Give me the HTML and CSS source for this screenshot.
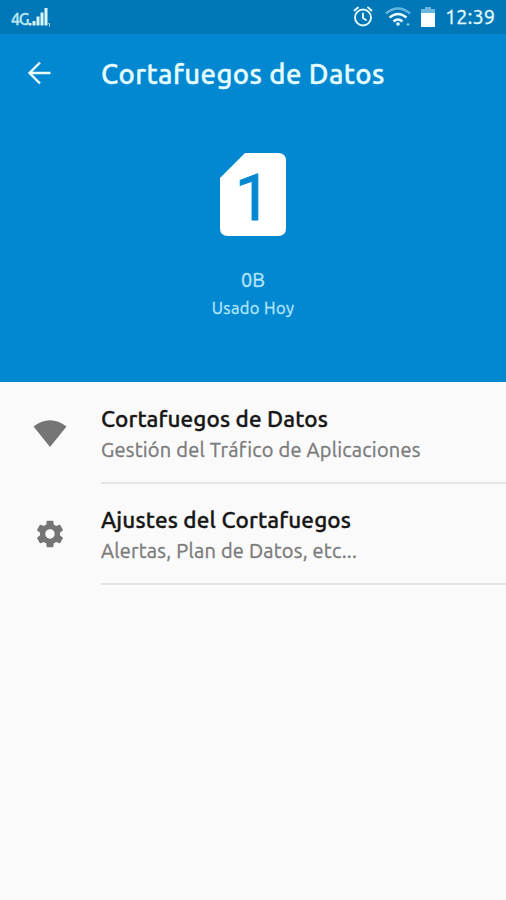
FILE: index.html
```html
<!DOCTYPE html>
<html lang="es">
<head>
<meta charset="utf-8">
<title>Cortafuegos de Datos</title>
<link rel="stylesheet" href="styles.css">
</head>
<body>
<div class="status">
  <div class="signal">
    <span class="net">4G</span>
    <svg width="24" height="20" viewBox="0 0 24 20" fill="#d9f7fb"><path d="M0 15h2.500v2.500H0zM3.500 13h3v4.500h-3zM7.500 8.500h3v9h-3zM11.500 4.500h3v13h-3zM15.500 0h3v17.500h-3z"/><path d="M19.500 15.500h1v3" fill="none" stroke="#b9e8f4"/></svg>
  </div>
  <div class="tray">
    <svg class="alarm" width="20" height="22" viewBox="0 0 20 22" fill="none" stroke="#e2fafb" stroke-width="1.900" stroke-linecap="round"><circle cx="10" cy="12.500" r="8"/><path d="M1.500 5.500l3.500-3M18.500 5.500l-3.500-3M10 8.500v4.500l3 2"/></svg>
    <svg class="wifi" width="26" height="20" viewBox="0 0 26 20" fill="none" stroke="#e5fbfc" stroke-width="2.600"><path d="M1 6.500Q13-3.500 25 6.500" stroke="#63b5df"/><path d="M4.500 10.500Q13 3.500 21.500 10.500M8.500 14.500Q13 10.500 17.500 14.500"/><circle cx="13" cy="17" r="1.800" fill="#e5fbfc" stroke="none"/><circle cx="23" cy="17.500" r="1.300" fill="#7dd5d8" stroke="none"/></svg>
    <svg class="battery" width="14" height="20" viewBox="0 0 14 20"><path d="M0 6V2h4V0h6v2h4v4z" fill="#69b5dc"/><path d="M0 6h14v14H0z" fill="#fff"/></svg>
    <span class="clock">12:39</span>
  </div>
</div>
<header class="header">
  <div class="bar">
    <svg class="back" width="24" height="24" viewBox="0 0 24 24" fill="none" stroke="#e8fcff" stroke-width="2.400"><path d="M23.500 12H3M13 1.500L2.500 12l10.500 10.500"/></svg>
    <h1 class="title">Cortafuegos de Datos</h1>
  </div>
  <svg class="sim" width="66" height="83" viewBox="0 0 66 83"><path d="M25 0H58Q66 0 66 8V75Q66 83 58 83H8Q0 83 0 75V25z" fill="#fff"/><text class="sim-number" x="33" y="67" text-anchor="middle">1</text></svg>
  <div class="amount">0B</div>
  <div class="caption">Usado Hoy</div>
</header>
<main>
  <section class="row">
    <svg class="icon" width="34" height="28" viewBox="0 0 34 28" fill="#757575"><path d="M.500 7.500Q17-5 33.500 7.500L17 28z"/></svg>
    <div class="body"><h2 class="name name-data">Cortafuegos de Datos</h2><p class="detail">Gestión del Tráfico de Aplicaciones</p></div>
  </section>
  <section class="row">
    <svg class="icon icon-gear" width="32" height="32" viewBox="0 0 24 24" fill="#757575"><path d="M19.430 12.980c.04-.32.07-.64.07-.98s-.03-.66-.07-.98l2.110-1.650c.19-.15.24-.42.12-.64l-2-3.460c-.12-.22-.39-.3-.61-.22l-2.490 1c-.52-.4-1.080-.73-1.690-.98l-.38-2.650C14.460 2.180 14.250 2 14 2h-4c-.25 0-.46.18-.49.42l-.38 2.650c-.61.25-1.170.59-1.690.98l-2.490-1c-.23-.09-.49 0-.61.22l-2 3.460c-.13.22-.07.49.12.64l2.110 1.650c-.04.32-.07.65-.07.98s.03.66.07.98l-2.110 1.650c-.19.15-.24.42-.12.64l2 3.460c.12.22.39.3.61.22l2.490-1c.52.4 1.080.73 1.690.98l.38 2.650c.03.24.24.42.49.42h4c.25 0 .46-.18.49-.42l.38-2.650c.61-.25 1.170-.59 1.690-.98l2.490 1c.23.09.49 0 .61-.22l2-3.460c.12-.22.07-.49-.12-.64zM12 15.500c-1.930 0-3.500-1.570-3.500-3.500s1.570-3.500 3.500-3.500 3.500 1.570 3.500 3.500-1.570 3.500-3.500 3.500z"/></svg>
    <div class="body"><h2 class="name">Ajustes del Cortafuegos</h2><p class="detail">Alertas, Plan de Datos, etc...</p></div>
  </section>
</main>
</body>
</html>
```

FILE: styles.css
```css
* { box-sizing: border-box; }
body {
  margin: 0;
  height: 900px;
  overflow: hidden;
  background: #fafafa;
  font-family: Ubuntu, "Noto Sans", sans-serif;
  -webkit-text-stroke: 0.35px currentColor;
}
h1, h2, p { margin: 0; }
svg { display: block; flex: none; }
.status {
  height: 34px;
  background: #0277b8;
  display: flex;
  justify-content: space-between;
  padding: 0 10px 0 11px;
}
.signal { display: flex; align-items: flex-start; padding-top: 8px; }
.net {
  width: 18px;
  margin-top: 3px;
  font: 500 16px/16px Ubuntu, sans-serif;
  letter-spacing: -1.2px;
  color: #b9e8f4;
}
.tray { display: flex; align-items: flex-start; }
.alarm { margin: 5px 12px 0 0; }
.wifi { margin: 7px 10px 0 0; }
.battery { margin: 7px 10px 0 0; }
.clock {
  width: 51px;
  font-size: 20px;
  line-height: 34px;
  white-space: nowrap;
  color: #e2fafb;
}
.header {
  height: 348px;
  background: #0288d1;
  display: flex;
  flex-direction: column;
  align-items: center;
}
.bar {
  width: 100%;
  height: 80px;
  display: flex;
  align-items: center;
  padding-left: 27px;
}
.back { margin: 0 50px 2px 0; }
.title {
  font-size: 27.5px;
  font-weight: 500;
  line-height: 36px;
  letter-spacing: 0.45px;
  white-space: nowrap;
  color: #e5fdff;
}
.sim { margin-top: 39px; }
.sim-number { font: 400 65px Roboto, sans-serif; fill: #0288d1; stroke: #0288d1; stroke-width: 0.8px; }
.amount {
  margin-top: 31px;
  font-size: 20px;
  line-height: 26px;
  color: #b3e5fc;
}
.caption {
  margin-top: 4px;
  font-size: 16.5px;
  line-height: 22px;
  letter-spacing: 0.4px;
  color: #b3e5fc;
}
.row { display: flex; height: 101px; }
.row .icon { margin: 0 34px 0 33px; align-self: center; }
.row .icon-gear { margin: 1px 35px 0 34px; }
.body {
  flex: 1;
  padding-top: 21px;
  border-bottom: 1px solid #e3e3e3;
  box-shadow: 0 1px 0 #e6e6e6;
  white-space: nowrap;
}
.name { font-size: 22.5px; font-weight: 500; line-height: 32px; letter-spacing: 0.15px; color: #171717; }
.name-data { letter-spacing: 0.1px; }
.detail { font-size: 20px; line-height: 30px; letter-spacing: 0.23px; color: #7b7b7b; }
```
